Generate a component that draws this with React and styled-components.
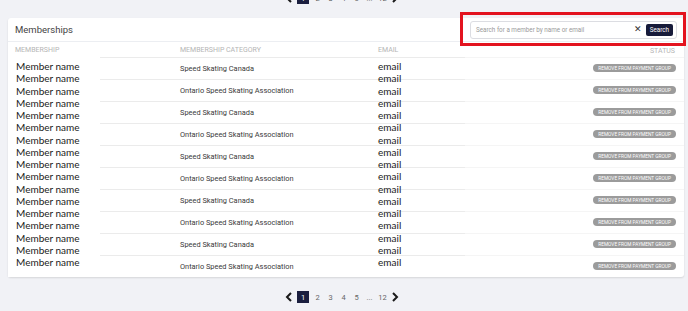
import React from "react";
import styled, { createGlobalStyle } from "styled-components";

const GlobalStyle = createGlobalStyle`
  html, body {
    margin: 0;
    padding: 0;
    background: #f1f2f6;
    font-family: Roboto, "Liberation Sans", Arial, sans-serif;
    overflow: hidden;
  }
`;

const Page = styled.div`
  display: flex;
  flex-direction: column;
  gap: 14px;
  padding: 0 4px 0 8px;
  margin-top: -8px;
`;

const Pager = styled.div`
  display: flex;
  align-items: center;
  justify-content: center;
  height: 12px;
  gap: 4px;
  margin-left: -8px;
`;

const PageNum = styled.span`
  min-width: ${(p) => (p.$active ? 12 : 9)}px;
  height: 12px;
  display: flex;
  align-items: center;
  justify-content: center;
  font-size: 7.5px;
  color: ${(p) => (p.$active ? "#fff" : "#666")};
  background: ${(p) => (p.$active ? "#1b1f3f" : "transparent")};
`;

const Chevron = ({ dir }) => (
  <svg width="8" height="10" viewBox="0 0 8 10">
    <polyline
      points={dir === "left" ? "6,1 2,5 6,9" : "2,1 6,5 2,9"}
      fill="none"
      stroke="#1a1a1a"
      strokeWidth="2"
    />
  </svg>
);

const Pagination = () => (
  <Pager>
    <Chevron dir="left" />
    <PageNum $active>1</PageNum>
    <PageNum>2</PageNum>
    <PageNum>3</PageNum>
    <PageNum>4</PageNum>
    <PageNum>5</PageNum>
    <PageNum>...</PageNum>
    <PageNum>12</PageNum>
    <Chevron dir="right" />
  </Pager>
);

const Card = styled.div`
  background: #fff;
  border-radius: 3px;
  box-shadow: 0 1px 2px rgba(0, 0, 0, 0.12);
`;

const CardHeader = styled.div`
  height: 24px;
  display: flex;
  align-items: center;
  justify-content: space-between;
  padding: 0 7px;
  border-bottom: 1px solid #eceef2;
  box-sizing: border-box;
`;

const Title = styled.h2`
  margin: 0;
  font-size: 9.5px;
  font-weight: 400;
  color: #444;
`;

const SearchBox = styled.div`
  position: relative;
  width: 207px;
  height: 18px;
  box-sizing: border-box;
  border: 1px solid #dcdde2;
  border-radius: 3px;
  display: flex;
  align-items: center;
  padding: 0 3px 0 5px;
  gap: 4px;
  &::after {
    content: "";
    position: absolute;
    top: -10px;
    left: -11px;
    right: -10px;
    bottom: -8px;
    border: 3px solid #e3131f;
    pointer-events: none;
  }
`;

const SearchInput = styled.span`
  flex: 1;
  font-size: 6.3px;
  color: #9a9a9a;
`;

const Clear = styled.span`
  font-size: 9px;
  color: #333;
  line-height: 1;
`;

const SearchButton = styled.span`
  background: #171b3a;
  color: #fff;
  font-size: 6.3px;
  border-radius: 2px;
  padding: 2px 4px;
`;

const HeadRow = styled.div`
  display: grid;
  grid-template-columns: 165px 198px 1fr 60px;
  height: 15px;
  align-items: center;
  padding: 0 9px 0 7px;
  font-size: 7px;
  color: #b5b5b5;
  text-transform: uppercase;
  span:last-child {
    text-align: right;
    padding-top: 2px;
  }
`;

const Body = styled.div`
  display: grid;
  grid-template-columns: 92px 270px 95px 1fr;
  grid-template-rows: repeat(10, 22px);
`;

const Row = styled.div`
  grid-column: 2 / -1;
  grid-row: ${(p) => p.$row};
  display: grid;
  grid-template-columns: 270px 1fr;
  align-items: center;
  background: linear-gradient(to right, #ebebeb 365px, #f5f5f5 365px) top /
    100% 1px no-repeat;
  padding-right: 8px;
`;

const Category = styled.span`
  padding-left: 80px;
  font-size: 7.4px;
  color: #3a3a3a;
`;

const RemoveButton = styled.span`
  justify-self: end;
  background: #9b9b9b;
  color: #fff;
  font-size: 4.8px;
  border-radius: 4px;
  padding: 1.5px 5px;
  text-transform: uppercase;
  white-space: nowrap;
`;

const Stack = styled.div`
  grid-row: 1 / -1;
  grid-column: ${(p) => p.$col};
  position: relative;
  z-index: 1;
  display: flex;
  flex-direction: column;
  padding: 3px 0 0 ${(p) => p.$indent}px;
  font-family: Lato, "Open Sans", sans-serif;
  font-size: 10px;
  line-height: 12.25px;
  color: #1a1a1a;
  background: ${(p) => (p.$solid ? "#fff" : "transparent")};
`;

const categories = [
  "Speed Skating Canada",
  "Ontario Speed Skating Association",
];

export default function App() {
  const rows = Array.from({ length: 10 }, (_, i) => categories[i % 2]);
  const names = Array.from({ length: 17 });
  return (
    <>
      <GlobalStyle />
      <Page>
        <Pagination />
        <Card>
          <CardHeader>
            <Title>Memberships</Title>
            <SearchBox>
              <SearchInput>Search for a member by name or email</SearchInput>
              <Clear>✕</Clear>
              <SearchButton>Search</SearchButton>
            </SearchBox>
          </CardHeader>
          <HeadRow>
            <span>Membership</span>
            <span>Membership Category</span>
            <span>Email</span>
            <span>Status</span>
          </HeadRow>
          <Body>
            <Stack $col={1} $indent={8} $solid>
              {names.map((_, i) => (
                <span key={i}>Member name</span>
              ))}
            </Stack>
            <Stack $col={3} $indent={8}>
              {names.map((_, i) => (
                <span key={i}>email</span>
              ))}
            </Stack>
            {rows.map((c, i) => (
              <Row key={i} $row={i + 1}>
                <Category>{c}</Category>
                <RemoveButton>Remove from payment group</RemoveButton>
              </Row>
            ))}
          </Body>
        </Card>
        <Pagination />
      </Page>
    </>
  );
}
